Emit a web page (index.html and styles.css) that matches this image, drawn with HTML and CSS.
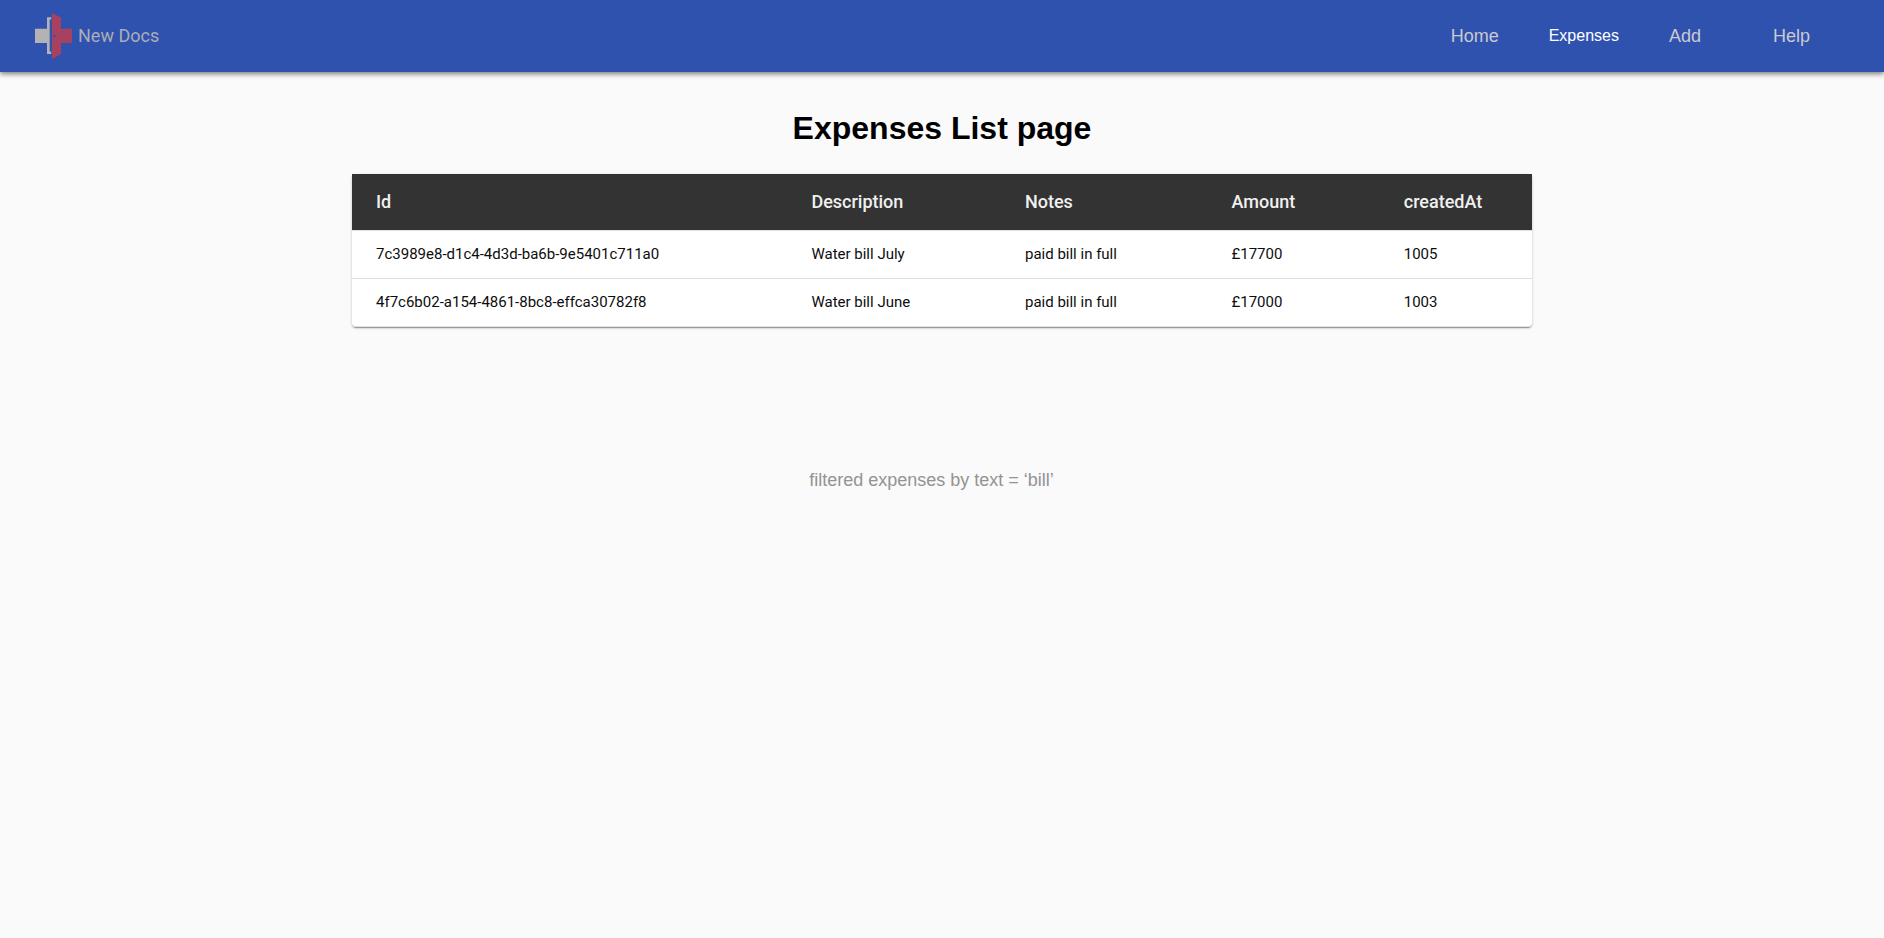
FILE: index.html
```html
<!DOCTYPE html>
<html lang="en">
<head>
<meta charset="utf-8">
<meta name="viewport" content="width=device-width, initial-scale=1">
<title>New Docs - Expenses</title>
<link rel="stylesheet" href="styles.css">
</head>
<body>
<header class="topbar">
  <a class="brand" href="#">
    <svg class="brand-mark" viewBox="0 0 37 46" aria-hidden="true">
      <path fill="#b3b3b3" d="M0 15.700h12V4.200h4.200v2.300h-1.500v32h1.500v2.500H12V30H0z"/>
      <path fill="#a8405f" d="M17 0l9 4.500v11.200h11V30H26v11l-9 5z"/>
      <ellipse cx="19.500" cy="22.800" rx="1" ry="1.500" fill="#3052af"/>
    </svg>
    <span>New Docs</span>
  </a>
  <nav class="nav">
    <a class="nav-link" href="#">Home</a>
    <a class="nav-link nav-link-active" href="#" aria-current="page">Expenses</a>
    <a class="nav-link" href="#">Add</a>
    <a class="nav-link nav-link-last" href="#">Help</a>
  </nav>
</header>
<main class="page">
  <h1 class="title">Expenses List page</h1>
  <table class="expenses">
    <colgroup>
      <col class="col-id"><col class="col-description"><col class="col-notes"><col class="col-amount"><col class="col-created">
    </colgroup>
    <thead>
      <tr><th scope="col">Id</th><th scope="col">Description</th><th scope="col">Notes</th><th scope="col">Amount</th><th scope="col">createdAt</th></tr>
    </thead>
    <tbody>
      <tr><td>7c3989e8-d1c4-4d3d-ba6b-9e5401c711a0</td><td>Water bill July</td><td>paid bill in full</td><td>£17700</td><td>1005</td></tr>
      <tr><td>4f7c6b02-a154-4861-8bc8-effca30782f8</td><td>Water bill June</td><td>paid bill in full</td><td>£17000</td><td>1003</td></tr>
    </tbody>
  </table>
  <p class="caption">filtered expenses by text = ‘bill’</p>
</main>
</body>
</html>
```
FILE: styles.css
```css
* { box-sizing: border-box; }

body {
  margin: 0;
  background: #fafafa;
  color: #000;
  font-family: "Liberation Sans", Arial, sans-serif;
}

.topbar {
  display: flex;
  align-items: center;
  justify-content: space-between;
  height: 72px;
  padding: 0 49px 0 35px;
  background: #3052af;
  box-shadow: 0 2px 5px rgba(0, 0, 0, 0.5);
}

.brand {
  display: flex;
  align-items: center;
  gap: 6px;
  color: #a9adb8;
  font-family: Roboto, sans-serif;
  font-size: 18px;
  font-weight: 400;
  line-height: 24px;
  text-decoration: none;
}

.brand-mark {
  width: 37px;
  height: 46px;
}

.nav {
  display: flex;
  align-items: center;
}

.nav-link {
  padding: 0 25px;
  color: #c9cad0;
  font-size: 18px;
  line-height: 24px;
  text-decoration: none;
}

.nav-link-active {
  color: #fff;
  font-size: 16px;
}

.nav-link-last { margin-left: 22px; }

.page {
  display: flex;
  flex-direction: column;
  align-items: center;
  padding: 38px 24px;
}

.title {
  margin: 0 0 28px;
  font-size: 32px;
  line-height: 36px;
}

.expenses {
  width: 100%;
  max-width: 1180px;
  table-layout: fixed;
  border-collapse: separate;
  border-spacing: 0;
  background: #fff;
  border-radius: 4px;
  box-shadow: 0 2px 1px -1px rgba(0, 0, 0, 0.2), 0 1px 1px rgba(0, 0, 0, 0.14), 0 1px 3px rgba(0, 0, 0, 0.2);
  font-family: Roboto, sans-serif;
  text-align: left;
}

.col-id { width: 36.9%; }
.col-description { width: 18.1%; }
.col-notes { width: 17.5%; }
.col-amount { width: 14.6%; }
.col-created { width: 12.9%; }

.expenses th {
  height: 57px;
  padding: 0 24px 2px;
  background: #333;
  border-bottom: 1px solid #e0e0e0;
  color: #f0f0f0;
  font-size: 18px;
  font-weight: 500;
}

.expenses td {
  height: 48px;
  padding: 0 24px 2px;
  border-bottom: 1px solid #e0e0e0;
  color: #0d0d0d;
  font-size: 15px;
}

.expenses tbody tr:last-child td:first-child { border-bottom-left-radius: 4px; }
.expenses tbody tr:last-child td:last-child { border-bottom-right-radius: 4px; }

.caption {
  margin: 141px 0 0;
  padding-right: 21px;
  color: #939393;
  font-size: 18px;
  line-height: 24px;
}
```
